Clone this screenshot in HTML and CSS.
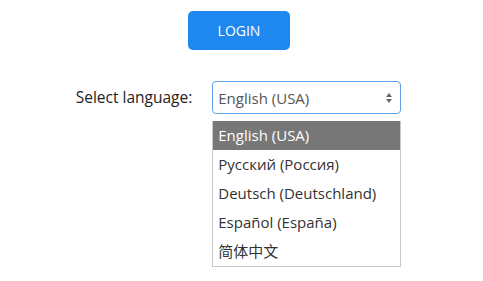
FILE: index.html
```html
<!DOCTYPE html>
<html lang="en">
<head>
    <meta charset="UTF-8">
    <meta name="viewport" content="width=device-width, initial-scale=1.0">
    <title>Login</title>
    <link rel="stylesheet" href="styles.css">
</head>
<body>
    <div class="page">
        <button class="login-btn">LOGIN</button>

        <div class="lang-row">
            <label class="lang-label">Select language:</label>
            <div class="lang-field">
                <div class="select-box">
                    <span class="select-value">English (USA)</span>
                    <svg class="select-arrows" width="8" height="12" viewBox="0 0 8 12">
                        <path d="M4 1 L7 5 L1 5 Z" fill="#666"/>
                        <path d="M4 11 L7 7 L1 7 Z" fill="#666"/>
                    </svg>
                </div>
                <div class="dropdown">
                    <div class="option active">English (USA)</div>
                    <div class="option">Русский (Россия)</div>
                    <div class="option">Deutsch (Deutschland)</div>
                    <div class="option">Español (España)</div>
                    <div class="option">简体中文</div>
                </div>
            </div>
        </div>
    </div>
</body>
</html>
```

FILE: styles.css
```css
body {
    margin: 0;
    font-family: 'Open Sans', 'Noto Sans CJK SC', sans-serif;
    background-color: #fff;
    color: #333;
}
.page {
    display: flex;
    flex-direction: column;
    align-items: center;
    padding-top: 11px;
}
.login-btn {
    width: 102px;
    height: 39px;
    margin-left: -5px;
    border: none;
    border-radius: 5px;
    background-color: #1f88ee;
    color: #fff;
    font-family: inherit;
    font-size: 14px;
}
.lang-row {
    display: flex;
    align-items: flex-start;
    gap: 20px;
    margin-top: 31px;
    margin-left: -6px;
}
.lang-label {
    height: 33px;
    line-height: 33px;
    font-size: 15.5px;
    color: #222;
}
.lang-field {
    display: flex;
    flex-direction: column;
    gap: 7px;
}
.select-box {
    box-sizing: border-box;
    width: 189px;
    height: 33px;
    border: 1px solid #5fa0ea;
    border-radius: 4px;
    display: flex;
    align-items: center;
    justify-content: space-between;
    padding: 0 7px 0 5px;
}
.select-value {
    font-size: 15px;
    color: #555;
}
.dropdown {
    box-sizing: border-box;
    width: 189px;
    border: 1px solid #c8c8c8;
    border-top: none;
    background-color: #fff;
}
.option {
    height: 29px;
    line-height: 29px;
    padding-left: 5px;
    font-size: 15px;
    color: #333;
}
.option.active {
    background-color: #777;
    color: #fff;
}
```
